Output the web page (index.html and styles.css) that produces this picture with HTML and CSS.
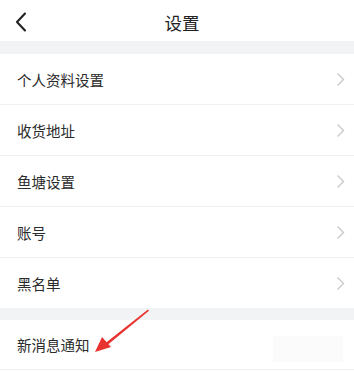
FILE: index.html
```html
<!DOCTYPE html>
<html lang="zh">
<head>
<meta charset="utf-8">
<link rel="stylesheet" href="styles.css">
</head>
<body>
<div class="page">
  <header class="nav">
    <svg class="back" width="12" height="20" viewBox="0 0 12 20"><path d="M10 1.5 L2 10 L10 18.5" fill="none" stroke="#222" stroke-width="2.1" stroke-linecap="round" stroke-linejoin="round"/></svg>
    <div class="title">设置</div>
  </header>
  <div class="gap"></div>
  <ul class="group">
    <li class="row"><span>个人资料设置</span><svg class="chev" width="9" height="15" viewBox="0 0 9 15"><path d="M1.5 1.5 L7.5 7.5 L1.5 13.5" fill="none" stroke="#c9c9cc" stroke-width="1.4"/></svg></li>
    <li class="row"><span>收货地址</span><svg class="chev" width="9" height="15" viewBox="0 0 9 15"><path d="M1.5 1.5 L7.5 7.5 L1.5 13.5" fill="none" stroke="#c9c9cc" stroke-width="1.4"/></svg></li>
    <li class="row"><span>鱼塘设置</span><svg class="chev" width="9" height="15" viewBox="0 0 9 15"><path d="M1.5 1.5 L7.5 7.5 L1.5 13.5" fill="none" stroke="#c9c9cc" stroke-width="1.4"/></svg></li>
    <li class="row"><span>账号</span><svg class="chev" width="9" height="15" viewBox="0 0 9 15"><path d="M1.5 1.5 L7.5 7.5 L1.5 13.5" fill="none" stroke="#c9c9cc" stroke-width="1.4"/></svg></li>
    <li class="row last"><span>黑名单</span><svg class="chev" width="9" height="15" viewBox="0 0 9 15"><path d="M1.5 1.5 L7.5 7.5 L1.5 13.5" fill="none" stroke="#c9c9cc" stroke-width="1.4"/></svg></li>
  </ul>
  <div class="gap small"></div>
  <ul class="group">
    <li class="row notify"><span>新消息通知</span><div class="blur"></div></li>
  </ul>
  <svg class="arrow" width="60" height="50" viewBox="0 0 60 50"><path d="M56 1.5 L57 2.8 L13 39 L11 37 Z" fill="#e8322f"/><path d="M3 44 L10 29 L19 39 Z" fill="#e8322f"/></svg>
</div>
</body>
</html>
```
FILE: styles.css
```css
* { box-sizing: border-box; }
html, body { margin: 0; padding: 0; background: #fff; }
body { font-family: "Noto Sans CJK SC", "Noto Sans", sans-serif; color: #333; }
.page { position: relative; width: 354px; height: 372px; overflow: hidden; background: #fff; }
.nav { height: 41px; display: flex; align-items: center; justify-content: center; position: relative; background: #fff; }
.back { position: absolute; left: 15px; top: 12px; }
.title { font-size: 17.5px; color: #222; line-height: 1; margin-top: 4px; margin-left: 10px; }
.gap { height: 13px; background: #f2f3f5; }
.gap.small { height: 12px; }
.group { list-style: none; margin: 0; padding: 0; }
.row { height: 51px; display: flex; align-items: center; justify-content: space-between; padding: 0 9px 0 17px; border-bottom: 1px solid #efeff1; font-size: 14.5px; color: #2b2b2b; }
.row.last { height: 50px; border-bottom: none; }
.row.notify { height: 50px; position: relative; }
.blur { width: 70px; height: 26px; background: #fbfbfb; margin-right: 2px; margin-top: 8px; border-radius: 2px; }
.arrow { position: absolute; left: 92px; top: 308px; }
```
